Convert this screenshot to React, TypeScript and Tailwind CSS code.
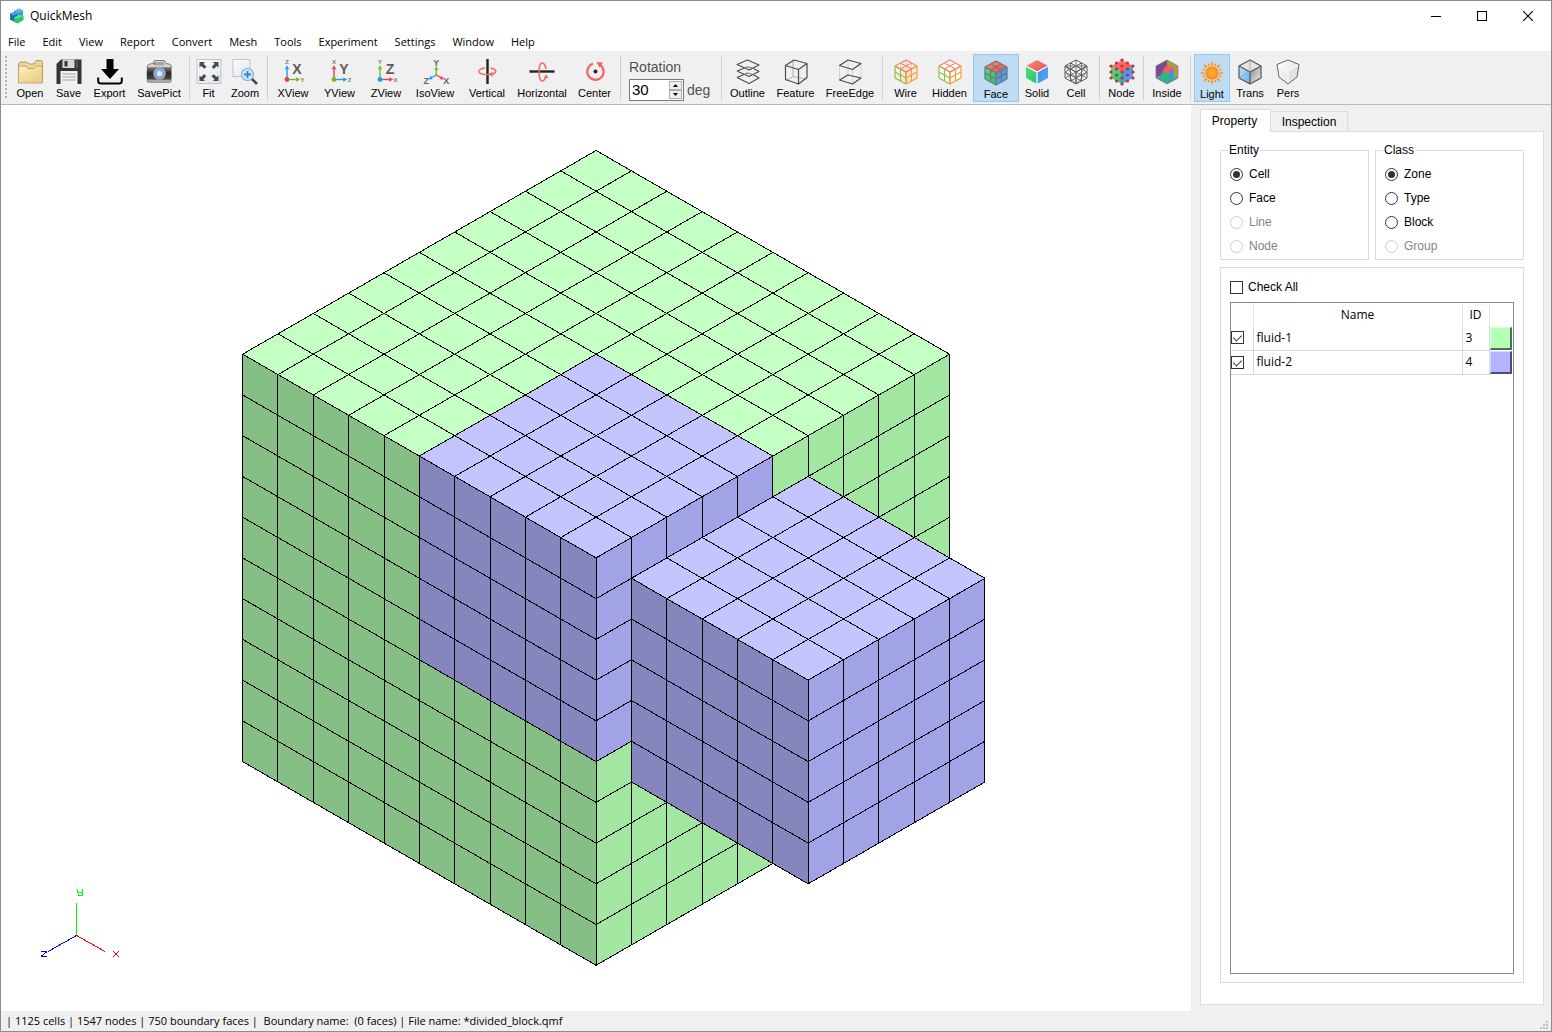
import React, { useState } from "react";

type Pt = [number, number];

/* ---------- Mesh view ---------- */

const DX = 35.35;
const DY = 20.37;
const project = (a: number, b: number, h: number): Pt => [595.1 + (a - b) * DX, 45.5 + (a + b + 2 * h) * DY];

const lerp = (p: Pt, q: Pt, t: number): Pt => [p[0] + (q[0] - p[0]) * t, p[1] + (q[1] - p[1]) * t];
const fmt = (p: Pt) => `${p[0].toFixed(2)} ${p[1].toFixed(2)}`;

/* Parallelogram p, p+u, p+u+v, p+v, divided n by m. */
function gridPath(p: Pt, pu: Pt, pv: Pt, n: number, m: number) {
  const puv: Pt = [pu[0] + pv[0] - p[0], pu[1] + pv[1] - p[1]];
  let d = "";
  for (let i = 0; i <= n; i++) d += `M${fmt(lerp(p, pu, i / n))}L${fmt(lerp(pv, puv, i / n))}`;
  for (let j = 0; j <= m; j++) d += `M${fmt(lerp(p, pv, j / m))}L${fmt(lerp(pu, puv, j / m))}`;
  return { outline: `M${fmt(p)}L${fmt(pu)}L${fmt(puv)}L${fmt(pv)}Z`, lines: d };
}

function Patch({ p, u, v, n, fill }: { p: Pt; u: Pt; v: Pt; n: number; fill: string }) {
  const g = gridPath(p, u, v, n, n);
  return (
    <g>
      <path d={g.outline} fill={fill} />
      <path d={g.lines} fill="none" stroke="#000" strokeWidth="1" />
    </g>
  );
}

const GREEN = ["#c4ffc4", "#86bf86", "#a2e6a2"];
const BLUE = ["#c4c4ff", "#8686bf", "#a2a2e6"];

function Block({ a, b, n, colors }: { a: number; b: number; n: number; colors: string[] }) {
  return (
    <g>
      <Patch p={project(a, b, 0)} u={project(a + n, b, 0)} v={project(a, b + n, 0)} n={n} fill={colors[0]} />
      <Patch p={project(a, b + n, 0)} u={project(a + n, b + n, 0)} v={project(a, b + n, n)} n={n} fill={colors[1]} />
      <Patch p={project(a + n, b + n, 0)} u={project(a + n, b, 0)} v={project(a + n, b + n, n)} n={n} fill={colors[2]} />
    </g>
  );
}

function MeshView() {
  return (
    <section aria-label="Mesh view" className="relative min-w-0 flex-1 overflow-hidden bg-white">
      <svg viewBox="0 0 1190 906" className="block h-full w-full" shapeRendering="crispEdges">
        <Block a={0} b={0} n={10} colors={GREEN} />
        <Block a={5} b={5} n={5} colors={BLUE} />
        <Block a={11} b={5} n={5} colors={BLUE} />
      </svg>
      <svg viewBox="0 0 100 90" className="absolute bottom-11 left-7 h-[90px] w-[100px]">
        <g shapeRendering="crispEdges" fill="none">
          <path d="M47.5 58V26" stroke="#00ff00" />
          <path d="M47.5 58.5L76 74.5" stroke="#ff0000" />
          <path d="M47.5 58.5L19 74.5" stroke="#0000ff" />
          <path d="M48.5 12v3.5h5M53.5 12v6.5h-4v-2" stroke="#00ff00" />
          <path d="M84 74l6 6M90 74l-6 6" stroke="#ff0000" />
          <path d="M12 74.5h6M18 74.5l-6 5M12 79.5h6" stroke="#0000ff" />
        </g>
      </svg>
    </section>
  );
}

/* ---------- Toolbar icons ---------- */

function Icon({ children }: { children: React.ReactNode }) {
  return (
    <svg viewBox="0 0 26 26" className="block size-[26px] shrink-0 overflow-visible" fill="none" aria-hidden="true">
      {children}
    </svg>
  );
}

const HEX = "M13 1L24 7V19L13 25L2 19V7Z";
const cubeTop = gridPath([13, 1], [24, 7], [2, 7], 2, 2);
const cubeLeft = gridPath([2, 7], [13, 13], [2, 19], 2, 2);
const cubeRight = gridPath([13, 13], [24, 7], [13, 25], 2, 2);

function CubeGradients({ id }: { id: string }) {
  return (
    <defs>
      <linearGradient id={`${id}t`} x1="0" x2="1" y1="0" y2="1">
        <stop stopColor="#ff8a80" />
        <stop offset="1" stopColor="#f04848" />
      </linearGradient>
      <linearGradient id={`${id}l`} x1="0" x2="1" y1="0" y2="1">
        <stop stopColor="#4fdc80" />
        <stop offset="1" stopColor="#2cc468" />
      </linearGradient>
      <linearGradient id={`${id}r`} x1="0" x2="1" y1="0" y2="1">
        <stop stopColor="#3a8cf0" />
        <stop offset="1" stopColor="#5aaaf8" />
      </linearGradient>
    </defs>
  );
}

function CubeFaces({ id }: { id: string }) {
  return (
    <>
      <CubeGradients id={id} />
      <path d={cubeTop.outline} fill={`url(#${id}t)`} />
      <path d={cubeLeft.outline} fill={`url(#${id}l)`} />
      <path d={cubeRight.outline} fill={`url(#${id}r)`} />
    </>
  );
}

const OpenIcon = () => (
  <Icon>
    <defs>
      <linearGradient id="folder" x1="0" x2="1" y1="0" y2="1">
        <stop stopColor="#fdf0c0" />
        <stop offset="1" stopColor="#e6c878" />
      </linearGradient>
    </defs>
    <path d="M1.5 23V4.5L3 3H10L12 5H17L19 1.5H24.5L25.5 3V22Z" fill="#ecd595" stroke="#a08c5a" strokeWidth=".8" />
    <path d="M1.5 24V9L3.5 7H9L11 9.5H17L19 7H25.5V24Z" fill="url(#folder)" stroke="#b39b61" strokeWidth=".8" />
  </Icon>
);

const SaveIcon = () => (
  <Icon>
    <path d="M5 .5H25.5V25H.5V5Z" fill="#343434" />
    <path d="M6.5 .5H18.5V9H6.5Z" fill="#d8d8d8" />
    <path d="M8.5 2H11.5V7.5H8.5Z" fill="#343434" />
    <path d="M20 .5H22V9H20Z" fill="#555" />
    <path d="M4.5 12H21.5V25H4.5Z" fill="#f1f1f1" />
    <path d="M6.5 15H19.5M6.5 18H19.5M6.5 21H19.5" stroke="#a5a5a5" strokeWidth="1.2" />
  </Icon>
);

const ExportIcon = () => (
  <Icon>
    <path d="M9.5 .5Q9.5 0 10 0H16Q16.5 0 16.5 .5V10H22L13 20L4 10H9.5Z" fill="#000" />
    <path d="M1.2 18.5V22Q1.2 24.5 4 24.5H22Q24.8 24.5 24.8 22V18.5" stroke="#000" strokeWidth="2" />
  </Icon>
);

const PictIcon = () => (
  <Icon>
    <defs>
      <linearGradient id="cam" x1="0" x2="0" y1="0" y2="1">
        <stop stopColor="#777" />
        <stop offset=".45" stopColor="#2a2a2a" />
        <stop offset="1" stopColor="#4c4c4c" />
      </linearGradient>
      <radialGradient id="lens">
        <stop stopColor="#fff" />
        <stop offset=".5" stopColor="#b8d4fa" />
        <stop offset="1" stopColor="#5a83c4" />
      </radialGradient>
    </defs>
    <path d="M1 9Q1 5.5 4 5L6.5 4.5L8.5 1.5H18.5L20 4.5L23 5Q25.5 5.5 25.5 9Z" fill="#d4d4d4" stroke="#666" strokeWidth=".8" />
    <path d="M9 3H18V6.5H9Z" fill="#a8a8a8" />
    <rect x=".8" y="8.5" width="24.7" height="12.5" rx="1.5" fill="url(#cam)" />
    <path d="M1 20.5H25.3V22Q25 23.5 23 23.5H3.5Q1 23.5 1 22Z" fill="#a9a9a9" stroke="#666" strokeWidth=".5" />
    <circle cx="13.5" cy="14.5" r="6.2" fill="#b5b5b5" />
    <circle cx="13.5" cy="14.5" r="5" fill="url(#lens)" />
    <circle cx="8.5" cy="4.8" r="1" fill="#f22" />
  </Icon>
);

const FrameBg = ({ size }: { size: number }) => (
  <>
    <defs>
      <linearGradient id={`frame${size}`} x1="0" x2="1" y1="0" y2="1">
        <stop stopColor="#fbfcff" />
        <stop offset="1" stopColor="#dde4ee" />
      </linearGradient>
    </defs>
    <rect x="1" y=".5" width={size} height={size} fill={`url(#frame${size})`} stroke="#b8bfc9" strokeWidth=".9" />
  </>
);

const FitIcon = () => (
  <Icon>
    <FrameBg size={24} />
    {[0, 90, 180, 270].map((r) => (
      <g key={r} transform={`rotate(${r} 13 12.5)`}>
        <path d="M3.5 3H9L7.5 4.7L10.5 7.7L8.3 9.8L5.2 6.9L3.5 8.5Z" fill="#4a4a4a" />
      </g>
    ))}
  </Icon>
);

const ZoomIcon = () => (
  <Icon>
    <FrameBg size={17} />
    <path d="M19.5 19.5L25 25" stroke="#444" strokeWidth="2.5" />
    <circle cx="15.5" cy="15.5" r="6" fill="#cfe9fb" stroke="#7fb2df" strokeWidth="1.2" />
    <path d="M15.5 12V19M12 15.5H19" stroke="#3d7fc4" strokeWidth="1.8" />
  </Icon>
);

const RED = "#f8384a";
const LIME = "#6cbf1c";
const SKY = "#18a0f0";

function AxisIcon({ big, up, side, cUp, cSide, cDot }: Record<"big" | "up" | "side" | "cUp" | "cSide" | "cDot", string>) {
  return (
    <Icon>
      <path d="M7 20V9" stroke={cUp} strokeWidth="1.4" />
      <path d="M7 6.2L9.3 10.2H4.7Z" fill={cUp} />
      <path d="M7 20.5H17" stroke={cSide} strokeWidth="1.4" />
      <path d="M20.2 20.5L16.2 18.3V22.7Z" fill={cSide} />
      <circle cx="7" cy="20.5" r="2.4" fill={cDot} />
      <g fontFamily="Liberation Sans, Arial, sans-serif" fontWeight="700">
        <text x="7" y="5.3" textAnchor="middle" fontSize="6" fill="#777">{up}</text>
        <text x="22.5" y="22.5" textAnchor="middle" fontSize="6" fill="#777">{side}</text>
        <text x="17" y="14.5" textAnchor="middle" fontSize="14" fill="#5c5c5c">{big}</text>
      </g>
    </Icon>
  );
}

const IsoIcon = () => (
  <Icon>
    <path d="M14.3 16V10" stroke={LIME} strokeWidth="1.4" />
    <path d="M14.3 7L16.3 11H12.3Z" fill={LIME} />
    <path d="M14.3 16L19.5 19" stroke={RED} strokeWidth="1.4" />
    <path d="M22 20.5L18 20.2L19.8 16.8Z" fill={RED} />
    <path d="M14.3 16L9 19" stroke={SKY} strokeWidth="1.4" />
    <path d="M6.6 20.5L10.6 20.2L8.8 16.8Z" fill={SKY} />
    <g fontFamily="Liberation Sans, Arial, sans-serif" fontWeight="700" fontSize="9" fill="#666" textAnchor="middle">
      <text x="14.3" y="6.5">Y</text>
      <text x="4.3" y="25">Z</text>
      <text x="24.3" y="25">X</text>
    </g>
  </Icon>
);

const VerticalIcon = () => (
  <Icon>
    <path d="M13.5 0V25" stroke="#222" strokeWidth="2.4" />
    <path d="M11 9C2.5 9.8 2.5 15.5 13.5 15.5C23.5 15.5 24.5 10.5 16.5 9" stroke="#f4665f" strokeWidth="1.5" />
    <path d="M15 15.2L18.5 12.5V18Z" fill="#f4665f" />
  </Icon>
);

const HorizontalIcon = () => (
  <Icon>
    <path d="M.5 12.5H25.5" stroke="#222" strokeWidth="2.4" />
    <path d="M17 10C15.5 1.5 10.2 1.5 10 12.5C10 22.5 14 25 16.8 18" stroke="#f4665f" strokeWidth="1.5" />
    <path d="M17.5 15.5L14.5 18.5L19.5 19.5Z" fill="#f4665f" />
  </Icon>
);

const CenterIcon = () => (
  <Icon>
    <path d="M11 4.8A8.2 8.2 0 1 0 18.5 6.2" stroke="#f4665f" strokeWidth="2.2" />
    <path d="M14.5 3L21 3.5L17.5 8.8Z" fill="#f4665f" />
    <circle cx="13.5" cy="12.5" r="1.9" fill="#222" />
  </Icon>
);

const OutlineIcon = () => (
  <Icon>
    <g stroke="#4d4d4d" strokeWidth="1.1" strokeLinejoin="round">
      <path d="M2 5.5L12.5 1L24 6L14 11Z" />
      <path d="M2 12L9 9.2M2 12L14 17.5L24 12.5L18.5 9.5" />
      <path d="M2 18.5L9 15.5M2 18.5L14 24.5L24 19L18.5 15.8" />
      <path d="M9 9.2L12.5 7.8L18.5 9.5M9 15.5L12.5 14L18.5 15.8" stroke="#777" />
    </g>
  </Icon>
);

const FeatureIcon = () => (
  <Icon>
    <path d="M10 1V17.5L2.5 22M10 17.5L24 20" stroke="#aaa" strokeWidth=".9" />
    <path d="M2.5 6.5L11 1L24 4.5L15.5 10.5ZM2.5 6.5V20.5L15.5 25V10.5M24 4.5V18.5L15.5 25" stroke="#4d4d4d" strokeWidth="1.2" strokeLinejoin="round" />
  </Icon>
);

const FreeEdgeIcon = () => (
  <Icon>
    <path d="M2.5 6.5V20.5M24 4.5V18.5M15.5 10.5V25M11 1V16" stroke="#ccc" strokeWidth=".8" />
    <path d="M2.5 6.5L11 1L24 4.5L15.5 10.5ZM2.5 21L11 16L24 19L15.5 25Z" stroke="#4d4d4d" strokeWidth="1.2" strokeLinejoin="round" />
  </Icon>
);

function WireCube({ back }: { back: boolean }) {
  return (
    <Icon>
      <path d={HEX} fill={back ? "#f6efe6" : "#fff"} />
      {back && (
        <path d="M2 19L13 13L24 19M13 1V13M7.5 4V16L18.5 22M18.5 4V16L7.5 22" stroke="#e6c8a0" strokeWidth=".7" />
      )}
      <path d={cubeLeft.lines} stroke="#86c440" strokeWidth="1.2" />
      <path d={cubeRight.lines} stroke="#fb9a34" strokeWidth="1.2" />
      <path d={cubeTop.lines} stroke="#fa8072" strokeWidth="1.2" />
    </Icon>
  );
}

const FaceIcon = () => (
  <Icon>
    <CubeFaces id="face" />
    <path d={cubeTop.lines + cubeLeft.lines + cubeRight.lines} stroke="#777" strokeWidth="1.3" />
  </Icon>
);

const SolidIcon = () => (
  <Icon>
    <CubeFaces id="solid" />
    <path d="M2 7L13 13L24 7M13 13V25" stroke="#fff" strokeWidth="1.2" />
  </Icon>
);

const CellIcon = () => (
  <Icon>
    <path d={HEX} fill="#fafafa" />
    <path d={cubeTop.lines + cubeLeft.lines + cubeRight.lines} stroke="#5a5a5a" strokeWidth="1" />
    <path
      d="M13 1V13M7.5 4V16M18.5 4V16M2 7H24M2 13L13 7L24 13M2 19L13 13L24 19M2 13L13 25L24 13M2 7L13 19L24 7M7.5 22L13 19L18.5 22"
      stroke="#6c6c6c"
      strokeWidth=".9"
    />
  </Icon>
);

const NODES: Pt[] = [
  [13, 1], [7.5, 4], [18.5, 4], [2, 7], [13, 7], [24, 7], [7.5, 10], [18.5, 10], [13, 13], [2, 13], [24, 13],
  [7.5, 16], [18.5, 16], [13, 19], [2, 19], [24, 19], [7.5, 22], [18.5, 22], [13, 25],
];

const NodeIcon = () => (
  <Icon>
    <CubeFaces id="node" />
    {NODES.map(([x, y]) => (
      <circle key={`${x}-${y}`} cx={x} cy={y} r="1.6" fill="#c22f36" />
    ))}
  </Icon>
);

const InsideIcon = () => (
  <Icon>
    <path d="M13 1L2 7V19L13 13Z" fill="#7b4b94" />
    <path d="M13 1L24 7V19L13 13Z" fill="#b39a3c" />
    <path d="M13 13L2 19L13 25L24 19Z" fill="#3aa898" />
    <path d={HEX} stroke="#777" strokeWidth=".7" />
    <path d="M11.5 7L19.5 8L16 14L8 13.5Z" fill="#f85c5c" />
    <path d="M8 13.5L15.5 14V21L8 18.5Z" fill="#22bf7c" />
    <path d="M15.5 14L19.5 8V16.5L15.5 21Z" fill="#3d8df2" />
  </Icon>
);

const LightIcon = () => (
  <Icon>
    <defs>
      <radialGradient id="sun">
        <stop stopColor="#ffb43c" />
        <stop offset="1" stopColor="#ff8c0a" />
      </radialGradient>
    </defs>
    {Array.from({ length: 16 }, (_, i) => (
      <path key={i} d={i % 2 ? "M11.9 5.2L13 2.3L14.1 5.2Z" : "M11.4 5.2L13 .8L14.6 5.2Z"} fill="#ff9410" transform={`rotate(${i * 22.5} 13 13)`} />
    ))}
    <circle cx="13" cy="13" r="6.7" fill="url(#sun)" />
  </Icon>
);

const TransIcon = () => (
  <Icon>
    <defs>
      <linearGradient id="tr" x1="0" x2="1" y1="0" y2="1">
        <stop stopColor="#888" />
        <stop offset="1" stopColor="#f4f4f4" />
      </linearGradient>
      <linearGradient id="tb" x1="0" x2="1" y1="0" y2="1">
        <stop stopColor="#c4e4ff" />
        <stop offset="1" stopColor="#58b0fa" />
      </linearGradient>
    </defs>
    <path d={cubeTop.outline} fill="#e4e4e4" />
    <path d={cubeRight.outline} fill="url(#tr)" />
    <path d={cubeLeft.outline} fill="url(#tb)" />
    <path d={`${HEX}M2 7L13 13L24 7M13 13V25`} stroke="#555" strokeWidth="1.2" strokeLinejoin="round" />
    <path d="M13 1V13L2 19" stroke="#999" strokeWidth=".7" />
  </Icon>
);

const PersIcon = () => (
  <Icon>
    <defs>
      <linearGradient id="pr" x1="0" x2="1" y1="0" y2="1">
        <stop stopColor="#fff" />
        <stop offset="1" stopColor="#d8d8d8" />
      </linearGradient>
    </defs>
    <path d="M13 1L24 5.5L22 18L13 25L4 18L2 5.5Z" fill="url(#pr)" />
    <path d="M13 11.5L24 5.5L22 18L13 25Z" fill="#e2e2e2" />
    <path d="M2 5.5L13 11.5L24 5.5M13 11.5V25" stroke="#fff" strokeWidth="1" />
    <path d="M13 1L24 5.5L22 18L13 25L4 18L2 5.5Z" stroke="#666" strokeWidth="1" strokeLinejoin="round" />
  </Icon>
);

/* ---------- Toolbar ---------- */

function Tool({ label, width, checked, children }: { label: string; width: string; checked?: boolean; children: React.ReactNode }) {
  return (
    <button
      type="button"
      aria-pressed={checked}
      className={`flex h-12 shrink-0 flex-col items-center border whitespace-nowrap ${width} ${
        checked ? "border-[#90c8f6] bg-[#c0dcf3] pt-[5px]" : "border-transparent pt-1 hover:bg-[#e0eefa]"
      }`}
    >
      {children}
      <span className="font-['Liberation_Sans',Arial,sans-serif] text-[11px] leading-4">{label}</span>
    </button>
  );
}

const Sep = () => <div className="mx-0.5 h-11 w-px shrink-0 bg-[#d0d0d0]" />;

function RotationBox() {
  const [value, setValue] = useState(30);
  return (
    <div className="h-12 w-24 shrink-0 pt-[3px] pl-1.5 font-['Liberation_Sans',Arial,sans-serif] text-sm leading-5 text-[#505050]">
      <label htmlFor="rotation" className="block">Rotation</label>
      <div className="mt-0.5 flex items-center gap-[3px]">
        <div className="flex h-[22px] w-[55px] items-center border border-[#7a7a7a] bg-white pr-px">
          <input
            id="rotation"
            value={value}
            onChange={(e) => setValue(Number(e.target.value) || 0)}
            className="w-0 flex-1 bg-transparent pl-0.5 text-[15px] text-black outline-none"
          />
          <div className="flex flex-col">
            <button type="button" aria-label="Increase" onClick={() => setValue(value + 1)} className="flex h-[9px] w-[13px] items-center justify-center border border-[#adadad] bg-[#f0f0f0]">
              <svg viewBox="0 0 5 3" className="h-[3px] w-[5px]"><path d="M0 3L2.5 0L5 3Z" /></svg>
            </button>
            <button type="button" aria-label="Decrease" onClick={() => setValue(value - 1)} className="flex h-[9px] w-[13px] items-center justify-center border border-[#adadad] bg-[#f0f0f0]">
              <svg viewBox="0 0 5 3" className="h-[3px] w-[5px]"><path d="M0 0L2.5 3L5 0Z" /></svg>
            </button>
          </div>
        </div>
        <span>deg</span>
      </div>
    </div>
  );
}

function Toolbar() {
  return (
    <div role="toolbar" aria-label="Main tools" className="flex h-[54px] shrink-0 items-center overflow-hidden border-t border-b border-t-[#f0f0f0] border-b-[#b9b9b9] bg-[#f0f0f0] pl-1">
      <div className="mr-1 h-11 w-0.5 shrink-0 bg-[repeating-linear-gradient(#b4b4b4_0_2px,transparent_2px_4px)]" />
      <Tool label="Open" width="w-[38px]"><OpenIcon /></Tool>
      <Tool label="Save" width="w-[39px]"><SaveIcon /></Tool>
      <Tool label="Export" width="w-[43px]"><ExportIcon /></Tool>
      <Tool label="SavePict" width="w-[56px]"><PictIcon /></Tool>
      <Sep />
      <Tool label="Fit" width="w-[33px]"><FitIcon /></Tool>
      <Tool label="Zoom" width="w-[40px]"><ZoomIcon /></Tool>
      <Sep />
      <Tool label="XView" width="w-[46px]"><AxisIcon big="X" up="Z" side="Y" cUp={SKY} cSide={LIME} cDot={RED} /></Tool>
      <Tool label="YView" width="w-[47px]"><AxisIcon big="Y" up="X" side="Z" cUp={RED} cSide={SKY} cDot={LIME} /></Tool>
      <Tool label="ZView" width="w-[46px]"><AxisIcon big="Z" up="Y" side="X" cUp={LIME} cSide={RED} cDot={SKY} /></Tool>
      <Tool label="IsoView" width="w-[52px]"><IsoIcon /></Tool>
      <Tool label="Vertical" width="w-[52px]"><VerticalIcon /></Tool>
      <Tool label="Horizontal" width="w-[58px]"><HorizontalIcon /></Tool>
      <Tool label="Center" width="w-[47px]"><CenterIcon /></Tool>
      <Sep />
      <RotationBox />
      <Sep />
      <Tool label="Outline" width="w-[47px]"><OutlineIcon /></Tool>
      <Tool label="Feature" width="w-[49px]"><FeatureIcon /></Tool>
      <Tool label="FreeEdge" width="w-[60px]"><FreeEdgeIcon /></Tool>
      <Sep />
      <Tool label="Wire" width="w-[41px]"><WireCube back /></Tool>
      <Tool label="Hidden" width="w-[47px]"><WireCube back={false} /></Tool>
      <Tool label="Face" width="w-[46px]" checked><FaceIcon /></Tool>
      <Tool label="Solid" width="w-[36px]"><SolidIcon /></Tool>
      <Tool label="Cell" width="w-[42px]"><CellIcon /></Tool>
      <Sep />
      <Tool label="Node" width="w-[39px]"><NodeIcon /></Tool>
      <Sep />
      <Tool label="Inside" width="w-[42px]"><InsideIcon /></Tool>
      <Sep />
      <Tool label="Light" width="ml-px w-[36px]" checked><LightIcon /></Tool>
      <Tool label="Trans" width="w-[40px]"><TransIcon /></Tool>
      <Tool label="Pers" width="w-[36px]"><PersIcon /></Tool>
    </div>
  );
}

/* ---------- Title and menu ---------- */

function TitleBar() {
  return (
    <header className="flex h-[30px] shrink-0 items-center bg-white pl-2">
      <svg viewBox="0 0 16 16" className="size-4" aria-hidden="true">
        <path d="M5 3L10 .5L14 2.5V8L8 11L5 9Z" fill="#3d9be0" />
        <path d="M5 3L10 .5L14 2.5L9 5Z" fill="#64b9f0" />
        <path d="M1 5.5L5 4L8 6V13L5.5 14L1 11.5Z" fill="#1f6fb0" />
        <path d="M1 5.5L5 4L8 6L4 7.5Z" fill="#4aa4e4" />
        <path d="M5 9.5L10 7L14.5 8V12L8.5 15.5L5 14Z" fill="#2fc46a" />
        <path d="M5 9.5L10 7L14.5 8L9 10.5Z" fill="#5ce08e" />
      </svg>
      <h1 className="ml-[5px] flex-1 text-xs leading-4">QuickMesh</h1>
      <div className="flex">
        <button type="button" aria-label="Minimize" className="flex h-7 w-[46px] items-center justify-center">
          <svg viewBox="0 0 10 10" className="size-2.5" shapeRendering="crispEdges"><path d="M0 5.5H10" stroke="#000" /></svg>
        </button>
        <button type="button" aria-label="Maximize" className="flex h-7 w-[46px] items-center justify-center">
          <svg viewBox="0 0 10 10" className="size-2.5" shapeRendering="crispEdges"><path d="M.5 .5H9.5V9.5H.5Z" fill="none" stroke="#000" /></svg>
        </button>
        <button type="button" aria-label="Close" className="flex h-7 w-[46px] items-center justify-center">
          <svg viewBox="0 0 10 10" className="size-2.5"><path d="M0 0L10 10M10 0L0 10" stroke="#000" strokeWidth="1.2" /></svg>
        </button>
      </div>
    </header>
  );
}

const MENUS = ["File", "Edit", "View", "Report", "Convert", "Mesh", "Tools", "Experiment", "Settings", "Window", "Help"];

function MenuBar() {
  return (
    <nav aria-label="Menu" className="flex h-5 shrink-0 items-end gap-[17px] bg-white pl-[7px] text-[11px] leading-[18px]">
      {MENUS.map((m) => (
        <button key={m} type="button">{m}</button>
      ))}
    </nav>
  );
}

/* ---------- Property panel ---------- */

function RadioGroup({ title, options, disabled }: { title: string; options: string[]; disabled: string[] }) {
  const [value, setValue] = useState(options[0]);
  return (
    <fieldset className="min-w-0 flex-1 border border-[#dcdcdc] px-[9px] pt-1 pb-px">
      <legend className="-ml-0.5 px-px leading-4">{title}</legend>
      {options.map((o) => (
        <label key={o} className={`flex h-6 items-center gap-1.5 ${disabled.includes(o) ? "text-[#838383]" : ""}`}>
          <input
            type="radio"
            name={title}
            checked={value === o}
            disabled={disabled.includes(o)}
            onChange={() => setValue(o)}
            className="grid size-[13px] appearance-none place-items-center rounded-full border border-[#333] bg-white before:size-[7px] before:rounded-full checked:before:bg-[#333] disabled:border-[#ccc]"
          />
          {o}
        </label>
      ))}
    </fieldset>
  );
}

const CHECK =
  "relative block size-[13px] appearance-none border border-[#333] bg-white after:absolute after:top-px after:left-[3px] after:hidden after:h-2 after:w-[5px] after:rotate-45 after:border-r after:border-b after:border-[#333] checked:after:block";

const ZONES = [
  { name: "fluid-1", id: 3, color: "bg-[#b3ffb3] border-t-[#d9ffd9] border-l-[#d9ffd9] border-r-[#4d704d] border-b-[#4d704d]" },
  { name: "fluid-2", id: 4, color: "bg-[#b3b3ff] border-t-[#d9d9ff] border-l-[#d9d9ff] border-r-[#4d4d70] border-b-[#4d4d70]" },
];

function PropertyPanel() {
  return (
    <aside className="flex w-[360px] shrink-0 flex-col bg-[#f0f0f0] pt-1 pr-[7px] pb-1.5 pl-[9px] font-['Liberation_Sans',Arial,sans-serif] text-xs">
      <div role="tablist" className="relative z-10 -mb-px flex items-end">
        <button type="button" role="tab" aria-selected="true" className="h-[23px] w-[71px] border border-b-0 border-[#dcdcdc] bg-white pr-0.5">
          Property
        </button>
        <button type="button" role="tab" aria-selected="false" className="-ml-px h-[21px] w-[78px] border border-[#dcdcdc] bg-[#f0f0f0]">
          Inspection
        </button>
      </div>
      <div role="tabpanel" className="flex min-h-0 flex-1 flex-col border border-[#dcdcdc] bg-white px-[19px] pt-2.5 pb-[21px]">
        <div className="flex gap-1.5">
          <RadioGroup title="Entity" options={["Cell", "Face", "Line", "Node"]} disabled={["Line", "Node"]} />
          <RadioGroup title="Class" options={["Zone", "Type", "Block", "Group"]} disabled={["Group"]} />
        </div>
        <div className="mt-[7px] flex min-h-0 flex-1 flex-col border border-[#dcdcdc] px-[9px] pt-[11px] pb-2">
          <label className="flex h-4 items-center gap-[5px]">
            <input type="checkbox" className={CHECK} />
            Check All
          </label>
          <div className="mt-[7px] min-h-0 flex-1 border border-[#828790] font-['Open_Sans','Noto_Sans',sans-serif]">
            <table className="w-full table-fixed border-collapse">
              <colgroup>
                <col className="w-[22px]" />
                <col />
                <col className="w-[27px]" />
                <col className="w-6" />
              </colgroup>
              <thead>
                <tr className="h-[23px]">
                  <th className="border-r border-[#e5e5e5] font-normal" />
                  <th scope="col" className="border-r border-[#e5e5e5] font-normal">Name</th>
                  <th scope="col" className="border-r border-[#e5e5e5] font-normal">ID</th>
                  <th />
                </tr>
              </thead>
              <tbody>
                {ZONES.map((z) => (
                  <tr key={z.id} className="h-6">
                    <td className="border-r border-b border-[#d8d8d8] p-0">
                      <input type="checkbox" defaultChecked aria-label={`Show ${z.name}`} className={CHECK} />
                    </td>
                    <td className="border-r border-b border-[#d8d8d8] py-0 pr-0 pl-[3px]">{z.name}</td>
                    <td className="border-r border-b border-[#d8d8d8] py-0 pr-0 pl-[3px]">{z.id}</td>
                    <td className="p-0">
                      <button type="button" aria-label={`Color of ${z.name}`} className={`block h-[23px] w-[22px] border border-r-2 border-b-2 ${z.color}`} />
                    </td>
                  </tr>
                ))}
              </tbody>
            </table>
          </div>
        </div>
      </div>
    </aside>
  );
}

/* ---------- Window ---------- */

const GRIP: Pt[] = [[6, 0], [3, 3], [6, 3], [0, 6], [3, 6], [6, 6]];

export default function App() {
  return (
    <div className="flex h-screen min-h-[400px] flex-col border border-[#8c8c8c] bg-white font-['Open_Sans','Noto_Sans',sans-serif] text-black">
      <TitleBar />
      <MenuBar />
      <Toolbar />
      <main className="flex min-h-0 flex-1">
        <MeshView />
        <PropertyPanel />
      </main>
      <footer className="flex h-5 shrink-0 items-center justify-between bg-[#f0f0f0] pr-[3px] pl-[5px] text-[11px] leading-5 whitespace-pre">
        <span>| 1125 cells | 1547 nodes | 750 boundary faces |  Boundary name:  (0 faces) | File name: *divided_block.qmf</span>
        <svg viewBox="0 0 8 8" className="mt-2 size-2" aria-hidden="true">
          {GRIP.map(([x, y]) => (
            <rect key={`${x}-${y}`} x={x} y={y} width="2" height="2" fill="#bfbfbf" />
          ))}
        </svg>
      </footer>
    </div>
  );
}
